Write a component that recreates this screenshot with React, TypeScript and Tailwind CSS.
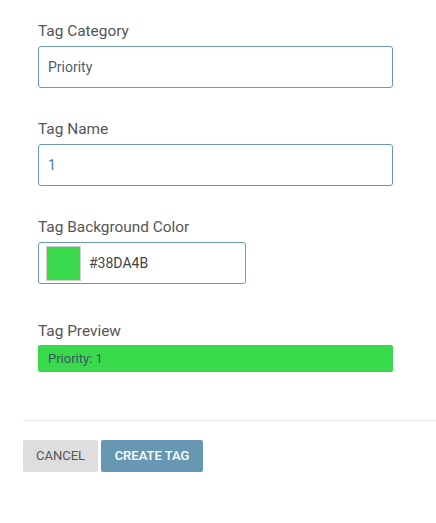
import React from "react";

export default function App() {
  return (
    <div className="w-[436px] h-[523px] bg-white" style={{ fontFamily: "Roboto, 'Noto Sans', sans-serif" }}>
      <div className="pl-[38px] pr-[43px] pt-[22px]">
        <div className="text-[15.4px] leading-[18px] text-[#555]">Tag Category</div>
        <div className="mt-[6px] h-[42px] border border-[#6b98b4] rounded-[3px] flex items-center px-[9px] text-[14px] text-[#4d5f6e]">Priority</div>

        <div className="mt-[32px] text-[15.4px] leading-[18px] text-[#555]">Tag Name</div>
        <div className="mt-[6px] h-[42px] border border-[#6b98b4] rounded-[3px] flex items-center px-[9px] text-[14px] text-[#4d7ea6]">1</div>

        <div className="mt-[32px] text-[15.4px] leading-[18px] text-[#555]">Tag Background Color</div>
        <div className="mt-[6px] w-[208px] h-[42px] border border-[#6b98b4] rounded-[3px] flex items-center pl-[7px] gap-[8px]">
          <div className="w-[35px] h-[35px] bg-[#38DA4B] border border-[#cfcfcf]" />
          <span className="text-[14px] text-[#444]">#38DA4B</span>
        </div>

        <div className="mt-[38px] text-[15.4px] leading-[18px] text-[#555]">Tag Preview</div>
        <div className="mt-[5px] h-[27px] bg-[#38DA4B] rounded-[2px] flex items-center px-[10px] text-[13px] text-[#3d5466]">Priority: 1</div>
      </div>
      <div className="ml-[23px] mt-[48px] border-t border-[#e8e8e8]" />
      <div className="ml-[23px] mt-[19px] flex gap-[3px]">
        <button className="w-[75px] h-[32px] bg-[#dedede] rounded-[2px] text-[13px] text-[#555] uppercase">Cancel</button>
        <button className="w-[102px] h-[32px] bg-[#6798b3] rounded-[2px] text-[13px] text-white font-medium uppercase">Create Tag</button>
      </div>
    </div>
  );
}
